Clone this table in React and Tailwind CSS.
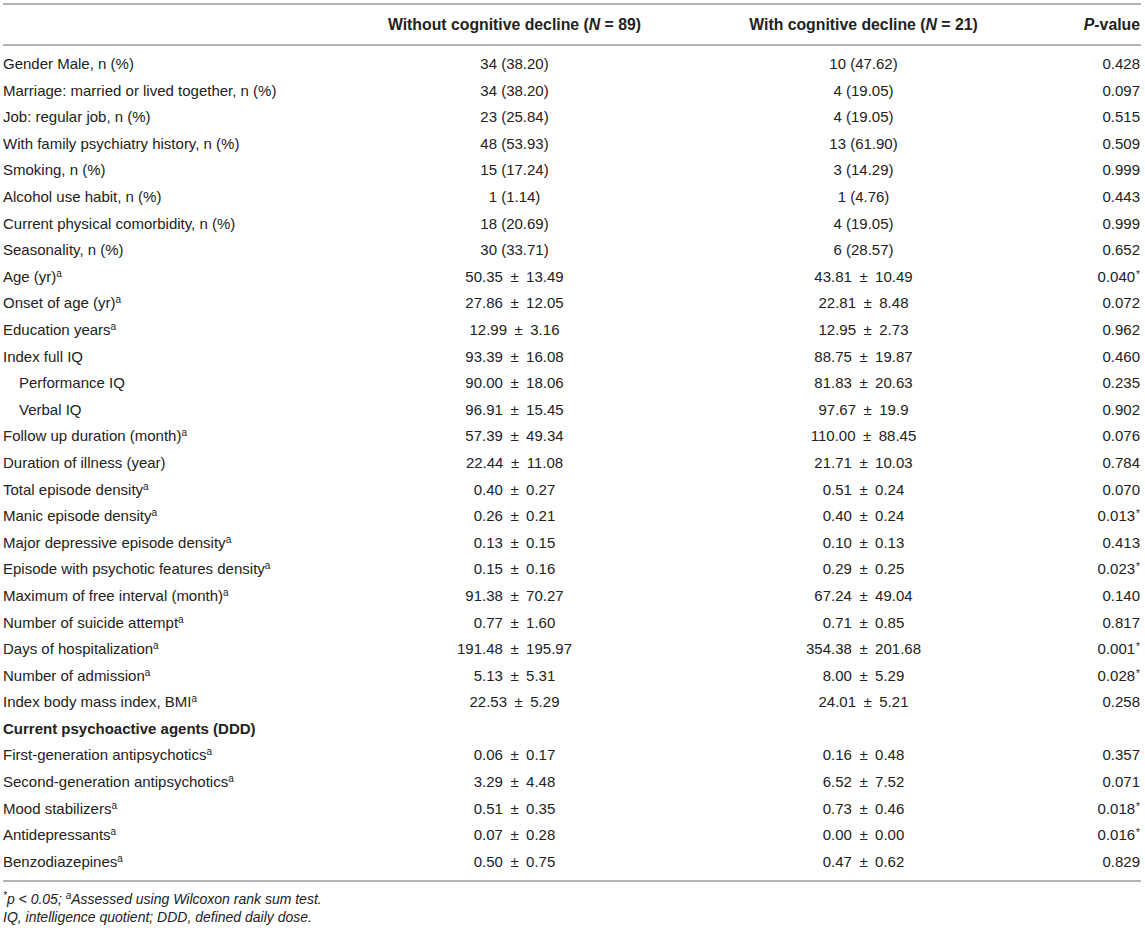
import React from "react";

const rows = [
  ["Gender Male, n (%)", "34 (38.20)", "10 (47.62)", "0.428"],
  ["Marriage: married or lived together, n (%)", "34 (38.20)", "4 (19.05)", "0.097"],
  ["Job: regular job, n (%)", "23 (25.84)", "4 (19.05)", "0.515"],
  ["With family psychiatry history, n (%)", "48 (53.93)", "13 (61.90)", "0.509"],
  ["Smoking, n (%)", "15 (17.24)", "3 (14.29)", "0.999"],
  ["Alcohol use habit, n (%)", "1 (1.14)", "1 (4.76)", "0.443"],
  ["Current physical comorbidity, n (%)", "18 (20.69)", "4 (19.05)", "0.999"],
  ["Seasonality, n (%)", "30 (33.71)", "6 (28.57)", "0.652"],
  ["Age (yr)", "50.35 ± 13.49", "43.81 ± 10.49", "0.040", true, true],
  ["Onset of age (yr)", "27.86 ± 12.05", "22.81 ± 8.48", "0.072", true],
  ["Education years", "12.99 ± 3.16", "12.95 ± 2.73", "0.962", true],
  ["Index full IQ", "93.39 ± 16.08", "88.75 ± 19.87", "0.460"],
  ["Performance IQ", "90.00 ± 18.06", "81.83 ± 20.63", "0.235", false, false, true],
  ["Verbal IQ", "96.91 ± 15.45", "97.67 ± 19.9", "0.902", false, false, true],
  ["Follow up duration (month)", "57.39 ± 49.34", "110.00 ± 88.45", "0.076", true],
  ["Duration of illness (year)", "22.44 ± 11.08", "21.71 ± 10.03", "0.784"],
  ["Total episode density", "0.40 ± 0.27", "0.51 ± 0.24", "0.070", true],
  ["Manic episode density", "0.26 ± 0.21", "0.40 ± 0.24", "0.013", true, true],
  ["Major depressive episode density", "0.13 ± 0.15", "0.10 ± 0.13", "0.413", true],
  ["Episode with psychotic features density", "0.15 ± 0.16", "0.29 ± 0.25", "0.023", true, true],
  ["Maximum of free interval (month)", "91.38 ± 70.27", "67.24 ± 49.04", "0.140", true],
  ["Number of suicide attempt", "0.77 ± 1.60", "0.71 ± 0.85", "0.817", true],
  ["Days of hospitalization", "191.48 ± 195.97", "354.38 ± 201.68", "0.001", true, true],
  ["Number of admission", "5.13 ± 5.31", "8.00 ± 5.29", "0.028", true, true],
  ["Index body mass index, BMI", "22.53 ± 5.29", "24.01 ± 5.21", "0.258", true],
  ["HEADER"],
  ["First-generation antipsychotics", "0.06 ± 0.17", "0.16 ± 0.48", "0.357", true],
  ["Second-generation antipsychotics", "3.29 ± 4.48", "6.52 ± 7.52", "0.071", true],
  ["Mood stabilizers", "0.51 ± 0.35", "0.73 ± 0.46", "0.018", true, true],
  ["Antidepressants", "0.07 ± 0.28", "0.00 ± 0.00", "0.016", true, true],
  ["Benzodiazepines", "0.50 ± 0.75", "0.47 ± 0.62", "0.829", true],
];

function Val({ v }) {
  const parts = v.split(" ± ");
  if (parts.length === 1) return <>{v}</>;
  return (
    <>
      {parts[0]}
      {"\u2002±\u2002"}
      {parts[1]}
    </>
  );
}

const grid = "grid grid-cols-[382px_259px_399px_1fr] items-center";

export default function App() {
  return (
    <div
      className="w-[1138px] ml-[3px] bg-white text-[#222] text-[15px]"
      style={{ fontFamily: '"Liberation Sans", Arial, Helvetica, sans-serif' }}
    >
      <div className="h-[3px]" />
      <div className="h-[2px] bg-[#b5b5b5]" />
      <div className={grid + " h-[39px] font-bold text-[15.8px]"}>
        <div />
        <div className="text-center whitespace-nowrap">
          Without cognitive decline (<i>N</i> = 89)
        </div>
        <div className="text-center whitespace-nowrap pl-[40px]">
          With cognitive decline (<i>N</i> = 21)
        </div>
        <div className="text-right whitespace-nowrap pr-[1px]">
          <i>P</i>-value
        </div>
      </div>
      <div className="h-[2px] bg-[#b5b5b5]" />
      <div className="py-[5px]">
        {rows.map((r, i) => {
          if (r[0] === "HEADER") {
            return (
              <div key={i} className={grid + " h-[26.6px]"}>
                <div className="font-bold whitespace-nowrap">Current psychoactive agents (DDD)</div>
                <div />
                <div />
                <div />
              </div>
            );
          }
          const [label, a, b, p, sup, star, indent] = r;
          return (
            <div key={i} className={grid + " h-[26.6px]"}>
              <div className={"whitespace-nowrap " + (indent ? "pl-[16px]" : "")}>
                {label}
                {sup && <sup className="text-[10px] -top-[5px]">a</sup>}
              </div>
              <div className="text-center whitespace-nowrap">
                <Val v={a} />
              </div>
              <div className="text-center whitespace-nowrap pl-[40px]">
                <Val v={b} />
              </div>
              <div className="text-right whitespace-nowrap pr-[1px]">
                {p}
                {star ? <sup className="text-[10px] -top-[4px] ml-[1px]">*</sup> : <span className="inline-block w-0" />}
              </div>
            </div>
          );
        })}
      </div>
      <div className="h-[2px] bg-[#b5b5b5]" />
      <div className="pt-[8px] text-[14px] italic leading-[18px]">
        <div>
          <sup className="text-[10px]">*</sup>p &lt; 0.05; <sup className="text-[10px]">a</sup>Assessed using Wilcoxon rank sum test.
        </div>
        <div>IQ, intelligence quotient; DDD, defined daily dose.</div>
      </div>
    </div>
  );
}
